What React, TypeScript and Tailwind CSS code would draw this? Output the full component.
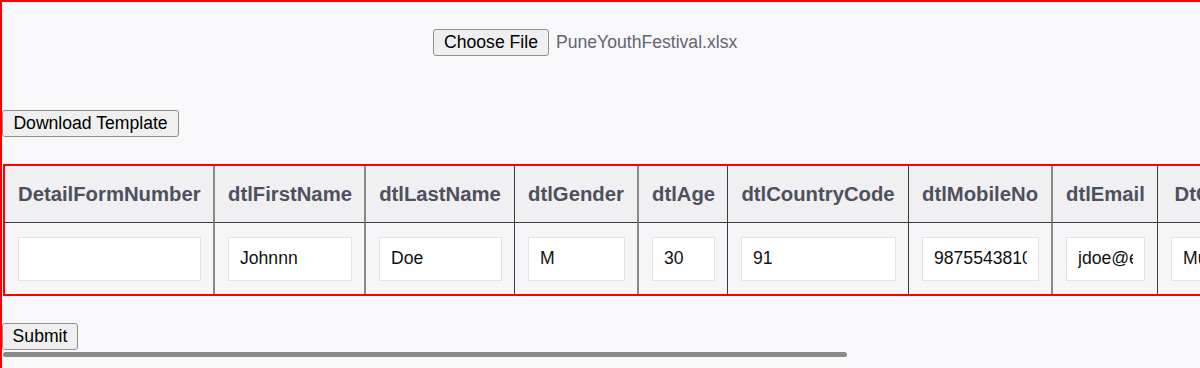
import React from "react";

const cols: { name: string; w: number; sep: "g" | "d"; value: string }[] = [
  { name: "DetailFormNumber", w: 210, sep: "g", value: "" },
  { name: "dtlFirstName", w: 151, sep: "g", value: "Johnnn" },
  { name: "dtlLastName", w: 149, sep: "d", value: "Doe" },
  { name: "dtlGender", w: 124, sep: "g", value: "M" },
  { name: "dtlAge", w: 89, sep: "d", value: "30" },
  { name: "dtlCountryCode", w: 181, sep: "d", value: "91" },
  { name: "dtlMobileNo", w: 144, sep: "g", value: "9875543810" },
  { name: "dtlEmail", w: 105, sep: "d", value: "jdoe@example.com" },
  { name: "DtCollegeName", w: 185, sep: "g", value: "Mumbai University" },
  { name: "DtState", w: 118, sep: "d", value: "Maharashtra" },
  { name: "DtPincode", w: 140, sep: "g", value: "411001" },
  { name: "DtRemarks", w: 98, sep: "d", value: "" },
];

export default function App() {
  return (
    <div className="h-[368px] w-full overflow-hidden bg-[#f8f8fa] font-['Liberation_Sans',Arial,sans-serif]">
      <div className="border-t-2 border-l-2 border-[#ff0000] min-h-[368px]">
        {/* file chooser row */}
        <div className="flex justify-center pt-[27px]">
          <div className="flex w-[336px] items-center gap-[7px]">
            <button className="h-[27px] w-[116px] shrink-0 rounded-[3px] border border-[#8f8f8f] bg-[#efefef] text-[17.6px] leading-none text-black">
              Choose File
            </button>
            <span className="whitespace-nowrap text-[17.6px] leading-none text-[#646473]">
              PuneYouthFestival.xlsx
            </span>
          </div>
        </div>

        <div className="mt-[54px]">
          <button className="h-[27px] w-[177px] rounded-[3px] border border-[#8f8f8f] bg-[#efefef] text-[17.6px] leading-none text-black">
            Download Template
          </button>
        </div>

        <div className="mt-[27px] overflow-hidden">
          <table className="ml-[1px] w-[1697px] table-fixed border-separate border-spacing-0 border-2 border-[#ff0000]">
            <thead>
              <tr className="bg-[#f0f0f2]">
                {cols.map((c, i) => (
                  <th
                    key={c.name}
                    style={{ width: c.w }}
                    className={
                      "h-[57px] whitespace-nowrap border-b border-b-[#3c3c3c] px-[13px] text-center text-[20.3px] font-bold text-[#4f4f5f] " +
                      (i === cols.length - 1
                        ? ""
                        : c.sep === "g"
                        ? "border-r-2 border-r-[#8a8a8a]"
                        : "border-r border-r-[#3c3c3c]")
                    }
                  >
                    {c.name}
                  </th>
                ))}
              </tr>
            </thead>
            <tbody>
              <tr className="bg-[#f6f6f8]">
                {cols.map((c, i) => (
                  <td
                    key={c.name}
                    className={
                      "h-[71px] pl-[13px] pr-[12px] " +
                      (i === cols.length - 1
                        ? ""
                        : c.sep === "g"
                        ? "border-r-2 border-r-[#8a8a8a]"
                        : "border-r border-r-[#3c3c3c]")
                    }
                  >
                    <input
                      type="text"
                      defaultValue={c.value}
                      className="block h-[44px] w-full border border-[#e3e3e3] bg-white px-[11px] text-[17.6px] text-[#111] outline-none"
                    />
                  </td>
                ))}
              </tr>
            </tbody>
          </table>

          <div className="mt-[27px]">
            <button className="h-[27px] w-[76px] rounded-[3px] border border-[#8f8f8f] bg-[#efefef] text-[17.6px] leading-none text-black">
              Submit
            </button>
          </div>

          {/* horizontal scrollbar thumb */}
          <div className="mt-[2px] ml-[1px] h-[5px] w-[844px] rounded-full bg-[#8a8a8a]" />
        </div>
      </div>
    </div>
  );
}
